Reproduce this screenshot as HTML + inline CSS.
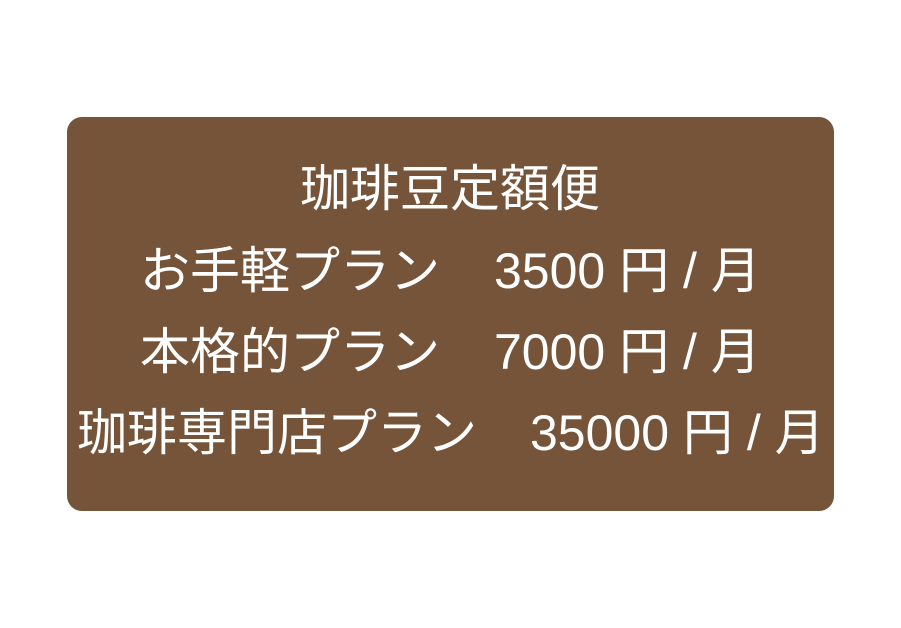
<!DOCTYPE html>
<html><head><meta charset="utf-8"><style>
body{margin:0;width:901px;height:628px;background:#fff;position:relative;overflow:hidden}
.box{position:absolute;left:67px;top:117px;width:767px;height:394px;background:#76543a;border-radius:15px}
.t{position:absolute;color:#fff;font-family:"Liberation Sans","Noto Sans CJK JP",sans-serif;font-size:50px;line-height:50px;white-space:pre}
.n{font-size:50px}
</style></head><body>
<div class="box"></div>
<div class="t" style="left:300px;top:164px">珈琲豆定額便</div>
<div class="t" style="left:140px;top:246px">お手軽プラン</div>
<div class="t n" style="left:494px;top:246px">3500 円 / 月</div>
<div class="t" style="left:140px;top:327px">本格的プラン</div>
<div class="t n" style="left:494px;top:327px">7000 円 / 月</div>
<div class="t" style="left:77px;top:408px">珈琲専門店プラン</div>
<div class="t n" style="left:530px;top:408px">35000 円 / 月</div>
</body></html>
